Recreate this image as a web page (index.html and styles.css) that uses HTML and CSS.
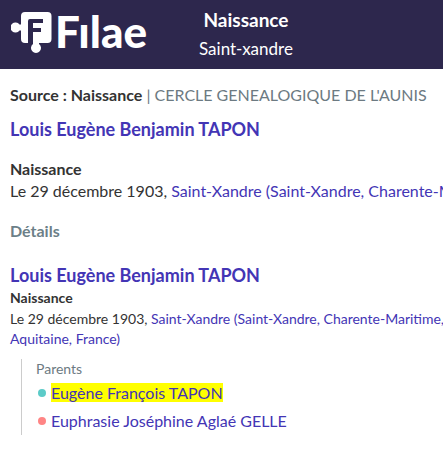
FILE: index.html
```html
<!DOCTYPE html>
<html lang="fr">
<head>
<meta charset="utf-8">
<meta name="viewport" content="width=device-width, initial-scale=1">
<title>Naissance - Saint-xandre</title>
<link rel="stylesheet" href="styles.css">
</head>
<body>
<header class="topbar">
  <a class="logo" href="#" aria-label="Filae">
    <svg class="logo-mark" viewBox="0 0 41 41" aria-hidden="true">
      <path fill="#fff" d="M14 0H36.500Q40.500 0 40.500 4V27Q40.500 31 36.500 31H28V32A5 5 0 1 1 22 32V31H14Q10 31 10 27V18.500H8.500A5 5 0 1 1 8.500 12.500H10V4Q10 0 14 0Z"/>
      <path fill="#2d274d" d="M19 7H32V11H22V16H30V20H22V31.500H17V9Q17 7 19 7Z"/>
    </svg>
    <span class="logo-name">Fılae</span>
  </a>
  <div class="heading">
    <h1 class="heading-title">Naissance</h1>
    <p class="heading-place">Saint-xandre</p>
  </div>
</header>
<main class="record">
  <p class="source"><strong>Source : Naissance</strong> | CERCLE GENEALOGIQUE DE L'AUNIS</p>
  <h2 class="person"><a href="#">Louis Eugène Benjamin TAPON</a></h2>
  <section class="event">
    <h3 class="event-title">Naissance</h3>
    <p class="event-line">Le 29 décembre 1903, <a href="#">Saint-Xandre (Saint-Xandre, Charente-Maritime, Nouvelle-Aquitaine, France)</a></p>
  </section>
  <h3 class="details-title">Détails</h3>
  <section class="details">
    <h2 class="person"><a href="#">Louis Eugène Benjamin TAPON</a></h2>
    <h3 class="birth-title">Naissance</h3>
    <p class="birth-line">Le 29 décembre 1903, <a href="#">Saint-Xandre (Saint-Xandre, Charente-Maritime,<br>Aquitaine, France)</a></p>
    <div class="family">
      <h4 class="family-title">Parents</h4>
      <ul class="parents">
        <li class="parent father"><a href="#"><mark>Eugène François TAPON</mark></a></li>
        <li class="parent mother"><a href="#">Euphrasie Joséphine Aglaé GELLE</a></li>
      </ul>
    </div>
  </section>
</main>
</body>
</html>
```
FILE: styles.css
```css
* { box-sizing: border-box; }
body, h1, h2, h3, h4, p, ul { margin: 0; padding: 0; }
body {
  background: #fff;
  color: #333;
  font: 16px/22px Lato, sans-serif;
  overflow-x: hidden;
}
a { color: #4335b5; text-decoration: none; }
.topbar {
  display: flex;
  align-items: flex-start;
  gap: 52px;
  padding: 6px 11px 5px;
  background: #2d274d;
  color: #fff;
}
.logo {
  display: flex;
  flex: none;
  gap: 3px;
  padding-top: 6px;
  color: #fff;
}
.logo-mark { width: 41px; height: 41px; }
.logo-name {
  font-size: 44px;
  font-weight: 900;
  line-height: 38px;
}
.heading { text-align: center; }
.heading-title { font-size: 19px; line-height: 28px; font-weight: 700; }
.heading-place { font-size: 17px; line-height: 30px; }
.record { padding: 15px 0 24px 10px; }
.source { color: #6c7a82; }
.source strong { color: #333; }
.source, .event-line, .birth-line { white-space: nowrap; }
.event-line { overflow: hidden; }
.person {
  font-size: 18px;
  line-height: 24px;
  font-weight: 700;
}
.source + .person { margin-top: 11px; }
.event { margin-top: 17px; }
.event-title { font-size: 16px; line-height: 22px; }
.details-title {
  margin-top: 18px;
  color: #6c7f88;
  font-size: 16px;
  line-height: 22px;
}
.details { margin-top: 21px; }
.birth-title { font-size: 14px; line-height: 22px; }
.birth-line { font-size: 14px; line-height: 20px; }
.family {
  margin: 10px 0 0 11px;
  padding-left: 14px;
  border-left: 1px solid #ccc;
}
.family-title {
  color: #6c7a82;
  font-size: 14px;
  line-height: 20px;
  font-weight: 400;
}
.parents { list-style: none; }
.parent {
  display: flex;
  align-items: center;
  gap: 5px;
  padding-left: 2px;
  line-height: 28px;
}
.parent::before {
  content: "";
  width: 8px;
  height: 8px;
  border-radius: 50%;
}
.father::before { background: #5ccbc8; }
.mother::before { background: #ff8585; }
mark { background: #ff0; color: inherit; }
```
